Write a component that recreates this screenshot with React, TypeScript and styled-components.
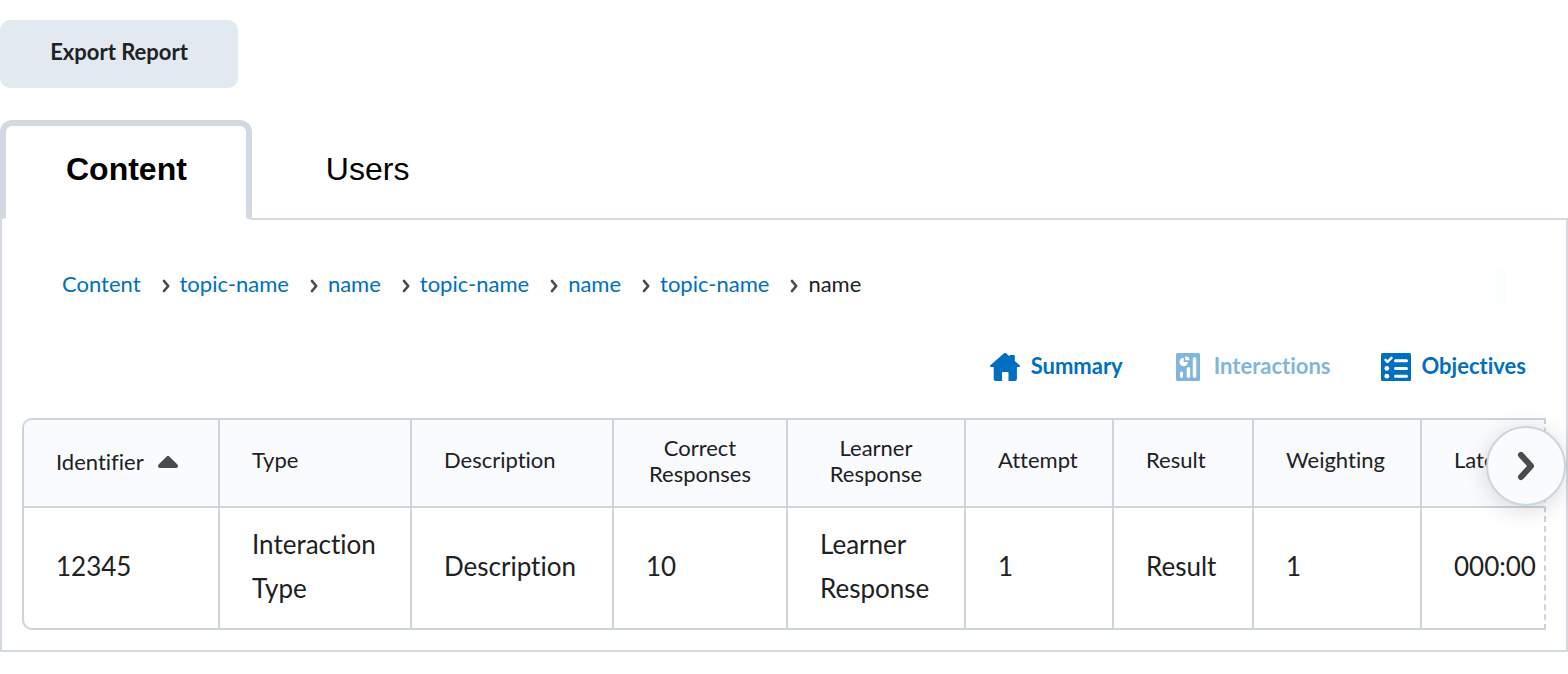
import React, { useRef, useState } from "react";
import styled, { createGlobalStyle } from "styled-components";

const ink = "#202122";
const link = "#006fbf";
const frame = "#d3d9e3";
const line = "#cdd5dc";
const tint = "#f9fbff";
const glyph = "#494c4e";

const GlobalStyle = createGlobalStyle`
  *, *::before, *::after { box-sizing: border-box; }
  body {
    margin: 0;
    background: #fff;
    color: ${ink};
    font-family: Lato, "Liberation Sans", sans-serif;
    font-size: 22px;
    font-variant-ligatures: none;
    line-height: 34px;
  }
  button {
    font: inherit;
    font-variant-ligatures: none;
    color: inherit;
    cursor: pointer;
  }
`;

const Page = styled.main`
  padding-top: 20px;
`;

const ExportButton = styled.button`
  display: block;
  min-width: 238px;
  padding: 15px 48px 19px;
  border: 0;
  border-radius: 10px;
  background: #e3e9f1;
  font-weight: 700;
`;

const TabBar = styled.div`
  display: flex;
  gap: 8px;
  margin: 32px 0 -2px;
`;

const Tab = styled.button<{ $active: boolean }>`
  position: relative;
  padding: 24px 59px 30px 60px;
  border: 6px solid ${(p) => (p.$active ? frame : "transparent")};
  border-bottom: 2px solid ${(p) => (p.$active ? "#fff" : "transparent")};
  border-radius: 12px 12px 0 0;
  background: ${(p) => (p.$active ? "#fff" : "transparent")};
  color: #000;
  font-family: "Liberation Sans", Arial, sans-serif;
  font-size: 32px;
  font-weight: ${(p) => (p.$active ? 700 : 400)};
  line-height: 38px;
`;

const Panel = styled.section`
  padding: 50px 20px 20px;
  border: 2px solid ${frame};
`;

const Breadcrumbs = styled.nav`
  position: relative;
  margin: 0 40px 42px;
  overflow: hidden;

  &::after {
    content: "";
    position: absolute;
    inset: 0 0 0 auto;
    width: 16px;
    background: linear-gradient(to right, #fefefe, #fbfefe);
  }
`;

const CrumbList = styled.ol`
  display: flex;
  margin: 0;
  padding: 0 0 6px;
  list-style: none;
  line-height: 28px;
`;

const Crumb = styled.li`
  display: flex;
  align-items: center;
  white-space: nowrap;

  a { color: ${link}; text-decoration: none; }
  svg { margin: 4px 10px 0 21px; }
`;

const Toolbar = styled.div`
  display: flex;
  justify-content: flex-end;
  gap: 50px;
  padding: 0 20px 32px 0;
`;

const ToolButton = styled.button`
  display: flex;
  align-items: center;
  gap: 11px;
  padding: 4px 0 2px;
  border: 0;
  background: none;
  color: ${link};
  font-weight: 700;
  line-height: 34px;

  &:disabled { opacity: 0.5; cursor: default; }
  span { padding-bottom: 2px; line-height: 32px; }
`;

const TableFrame = styled.div`
  position: relative;
`;

const Scroller = styled.div`
  overflow: hidden;
  border: 2px solid ${line};
  border-right-style: dashed;
  border-radius: 10px 0 0 10px;
`;

const Table = styled.table`
  table-layout: fixed;
  width: 1600px;
  border-collapse: separate;
  border-spacing: 0;
`;

const Col = styled.col<{ $width: number }>`
  width: ${(p) => p.$width}px;
`;

const HeadCell = styled.th<{ $centered?: boolean }>`
  height: 88px;
  padding: 0 32px ${(p) => (p.$centered ? 4 : 6)}px;
  border-right: 2px solid ${line};
  border-bottom: 2px solid ${line};
  background: ${tint};
  font-weight: 400;
  line-height: 26px;
  text-align: ${(p) => (p.$centered ? "center" : "left")};
`;

const SortButton = styled.button`
  display: flex;
  align-items: center;
  gap: 14px;
  padding: 4px 0 0;
  border: 0;
  background: none;
`;

const Cell = styled.td`
  height: 120px;
  padding: 0 32px 4px;
  border-right: 2px solid ${line};
  font-size: 26px;
  line-height: 44px;
`;

const ScrollButton = styled.button`
  position: absolute;
  top: 8px;
  right: -20px;
  display: flex;
  align-items: center;
  justify-content: center;
  width: 80px;
  height: 80px;
  padding: 0;
  border: 2px solid ${line};
  border-radius: 50%;
  background: ${tint};
  box-shadow: 0 4px 24px rgba(0, 0, 0, 0.15);
`;

const Chevron = () => (
  <svg width="8" height="14" viewBox="0 0 8 14" fill="none" stroke={glyph} strokeWidth="2.700" strokeLinecap="round" strokeLinejoin="round" aria-hidden="true">
    <path d="M2 2 6.200 7 2 12" />
  </svg>
);

const BigChevron = () => (
  <svg width="18" height="30" viewBox="0 0 18 30" fill="none" stroke={glyph} strokeWidth="6" strokeLinecap="round" strokeLinejoin="round" aria-hidden="true">
    <path d="M4 4 14 15 4 26" />
  </svg>
);

const SortArrow = () => (
  <svg width="20" height="12" viewBox="0 0 20 12" fill={glyph} aria-hidden="true">
    <path d="M8.600.600a2 2 0 0 1 2.800 0l8 7.800c1.200 1.400.6 3.600-1.400 3.600H2C0 12-.6 9.800.6 8.400z" />
  </svg>
);

const HomeIcon = () => (
  <svg width="30" height="28" viewBox="0 0 30 28" fill="currentColor" aria-hidden="true">
    <path d="M13.700.500a2 2 0 0 1 2.600 0l3.200 2.800V3a1 1 0 0 1 1-1h3.300a1 1 0 0 1 1 1v4.900l4.800 4.300c.8.800.3 1.800-.7 1.800h-2v12a2 2 0 0 1-2 2H18.500v-8a1 1 0 0 0-1-1h-4.500a1 1 0 0 0-1 1v8H5.700a2 2 0 0 1-2-2V14H1.100c-1 0-1.500-1-.7-1.800z" />
  </svg>
);

const ReportIcon = () => (
  <svg width="30" height="28" viewBox="-3 0 30 28" aria-hidden="true">
    <rect width="24" height="28" rx="1.500" fill="currentColor" />
    <g fill="#fff">
      <path d="M7.700 4.800a4.200 4.200 0 1 0 4.200 4.200H7.700z" />
      <path d="M9.300 3.200a4.200 4.200 0 0 1 4.200 4.100H9.300z" />
      <rect x="4" y="18.500" width="3" height="6.500" rx="1.500" />
      <rect x="10.700" y="14" width="3.500" height="11" rx="1.700" />
      <rect x="16.800" y="4" width="3.500" height="21" rx="1.700" />
    </g>
  </svg>
);

const ChecklistIcon = () => (
  <svg width="30" height="28" viewBox="0 0 30 28" aria-hidden="true">
    <rect width="30" height="28" rx="1.500" fill="currentColor" />
    <g fill="none" stroke="#fff" strokeWidth="3" strokeLinecap="round" strokeLinejoin="round">
      <path d="M4.500 6.800 6.500 8.800 10.500 4.800" strokeWidth="2.500" />
      <path d="M14.500 7.700H25.500M14.500 15.400H25.500M14.500 23.200H25.500" />
    </g>
    <circle cx="5.800" cy="15.400" r="2.400" fill="#fff" />
    <circle cx="5.800" cy="23.200" r="2.400" fill="#fff" />
  </svg>
);

const crumbs = ["Content", "topic-name", "name", "topic-name", "name", "topic-name"];

const columns: { label: string[]; width: number; value: string }[] = [
  { label: ["Type"], width: 192, value: "Interaction Type" },
  { label: ["Description"], width: 202, value: "Description" },
  { label: ["Correct", "Responses"], width: 174, value: "10" },
  { label: ["Learner", "Response"], width: 178, value: "Learner Response" },
  { label: ["Attempt"], width: 148, value: "1" },
  { label: ["Result"], width: 140, value: "Result" },
  { label: ["Weighting"], width: 168, value: "1" },
  { label: ["Latency"], width: 202, value: "000:00" },
];

export default function App() {
  const [tab, setTab] = useState("Content");
  const scroller = useRef<HTMLDivElement>(null);

  return (
    <>
      <GlobalStyle />
      <Page>
        <ExportButton type="button">Export Report</ExportButton>
        <TabBar role="tablist">
          {["Content", "Users"].map((name) => (
            <Tab key={name} type="button" role="tab" aria-selected={tab === name} $active={tab === name} onClick={() => setTab(name)}>
              {name}
            </Tab>
          ))}
        </TabBar>
        <Panel role="tabpanel">
          <Breadcrumbs aria-label="Breadcrumb">
            <CrumbList>
              {crumbs.map((name, i) => (
                <Crumb key={i}>
                  <a href="#">{name}</a>
                  <Chevron />
                </Crumb>
              ))}
              <Crumb aria-current="page">name</Crumb>
            </CrumbList>
          </Breadcrumbs>
          <Toolbar>
            <ToolButton type="button"><HomeIcon /><span>Summary</span></ToolButton>
            <ToolButton type="button" disabled><ReportIcon /><span>Interactions</span></ToolButton>
            <ToolButton type="button"><ChecklistIcon /><span>Objectives</span></ToolButton>
          </Toolbar>
          <TableFrame>
            <Scroller ref={scroller}>
              <Table>
                <colgroup>
                  <Col $width={196} />
                  {columns.map((c) => <Col key={c.label[0]} $width={c.width} />)}
                </colgroup>
                <thead>
                  <tr>
                    <HeadCell aria-sort="ascending">
                      <SortButton type="button">Identifier<SortArrow /></SortButton>
                    </HeadCell>
                    {columns.map((c) => (
                      <HeadCell key={c.label[0]} $centered={c.label.length > 1}>
                        {c.label.map((word, i) => (
                          <React.Fragment key={word}>{i > 0 && <br />}{word}</React.Fragment>
                        ))}
                      </HeadCell>
                    ))}
                  </tr>
                </thead>
                <tbody>
                  <tr>
                    <Cell>12345</Cell>
                    {columns.map((c) => <Cell key={c.label[0]}>{c.value}</Cell>)}
                  </tr>
                </tbody>
              </Table>
            </Scroller>
            <ScrollButton type="button" aria-label="Scroll right" onClick={() => scroller.current?.scrollBy({ left: 300, behavior: "smooth" })}>
              <BigChevron />
            </ScrollButton>
          </TableFrame>
        </Panel>
      </Page>
    </>
  );
}
